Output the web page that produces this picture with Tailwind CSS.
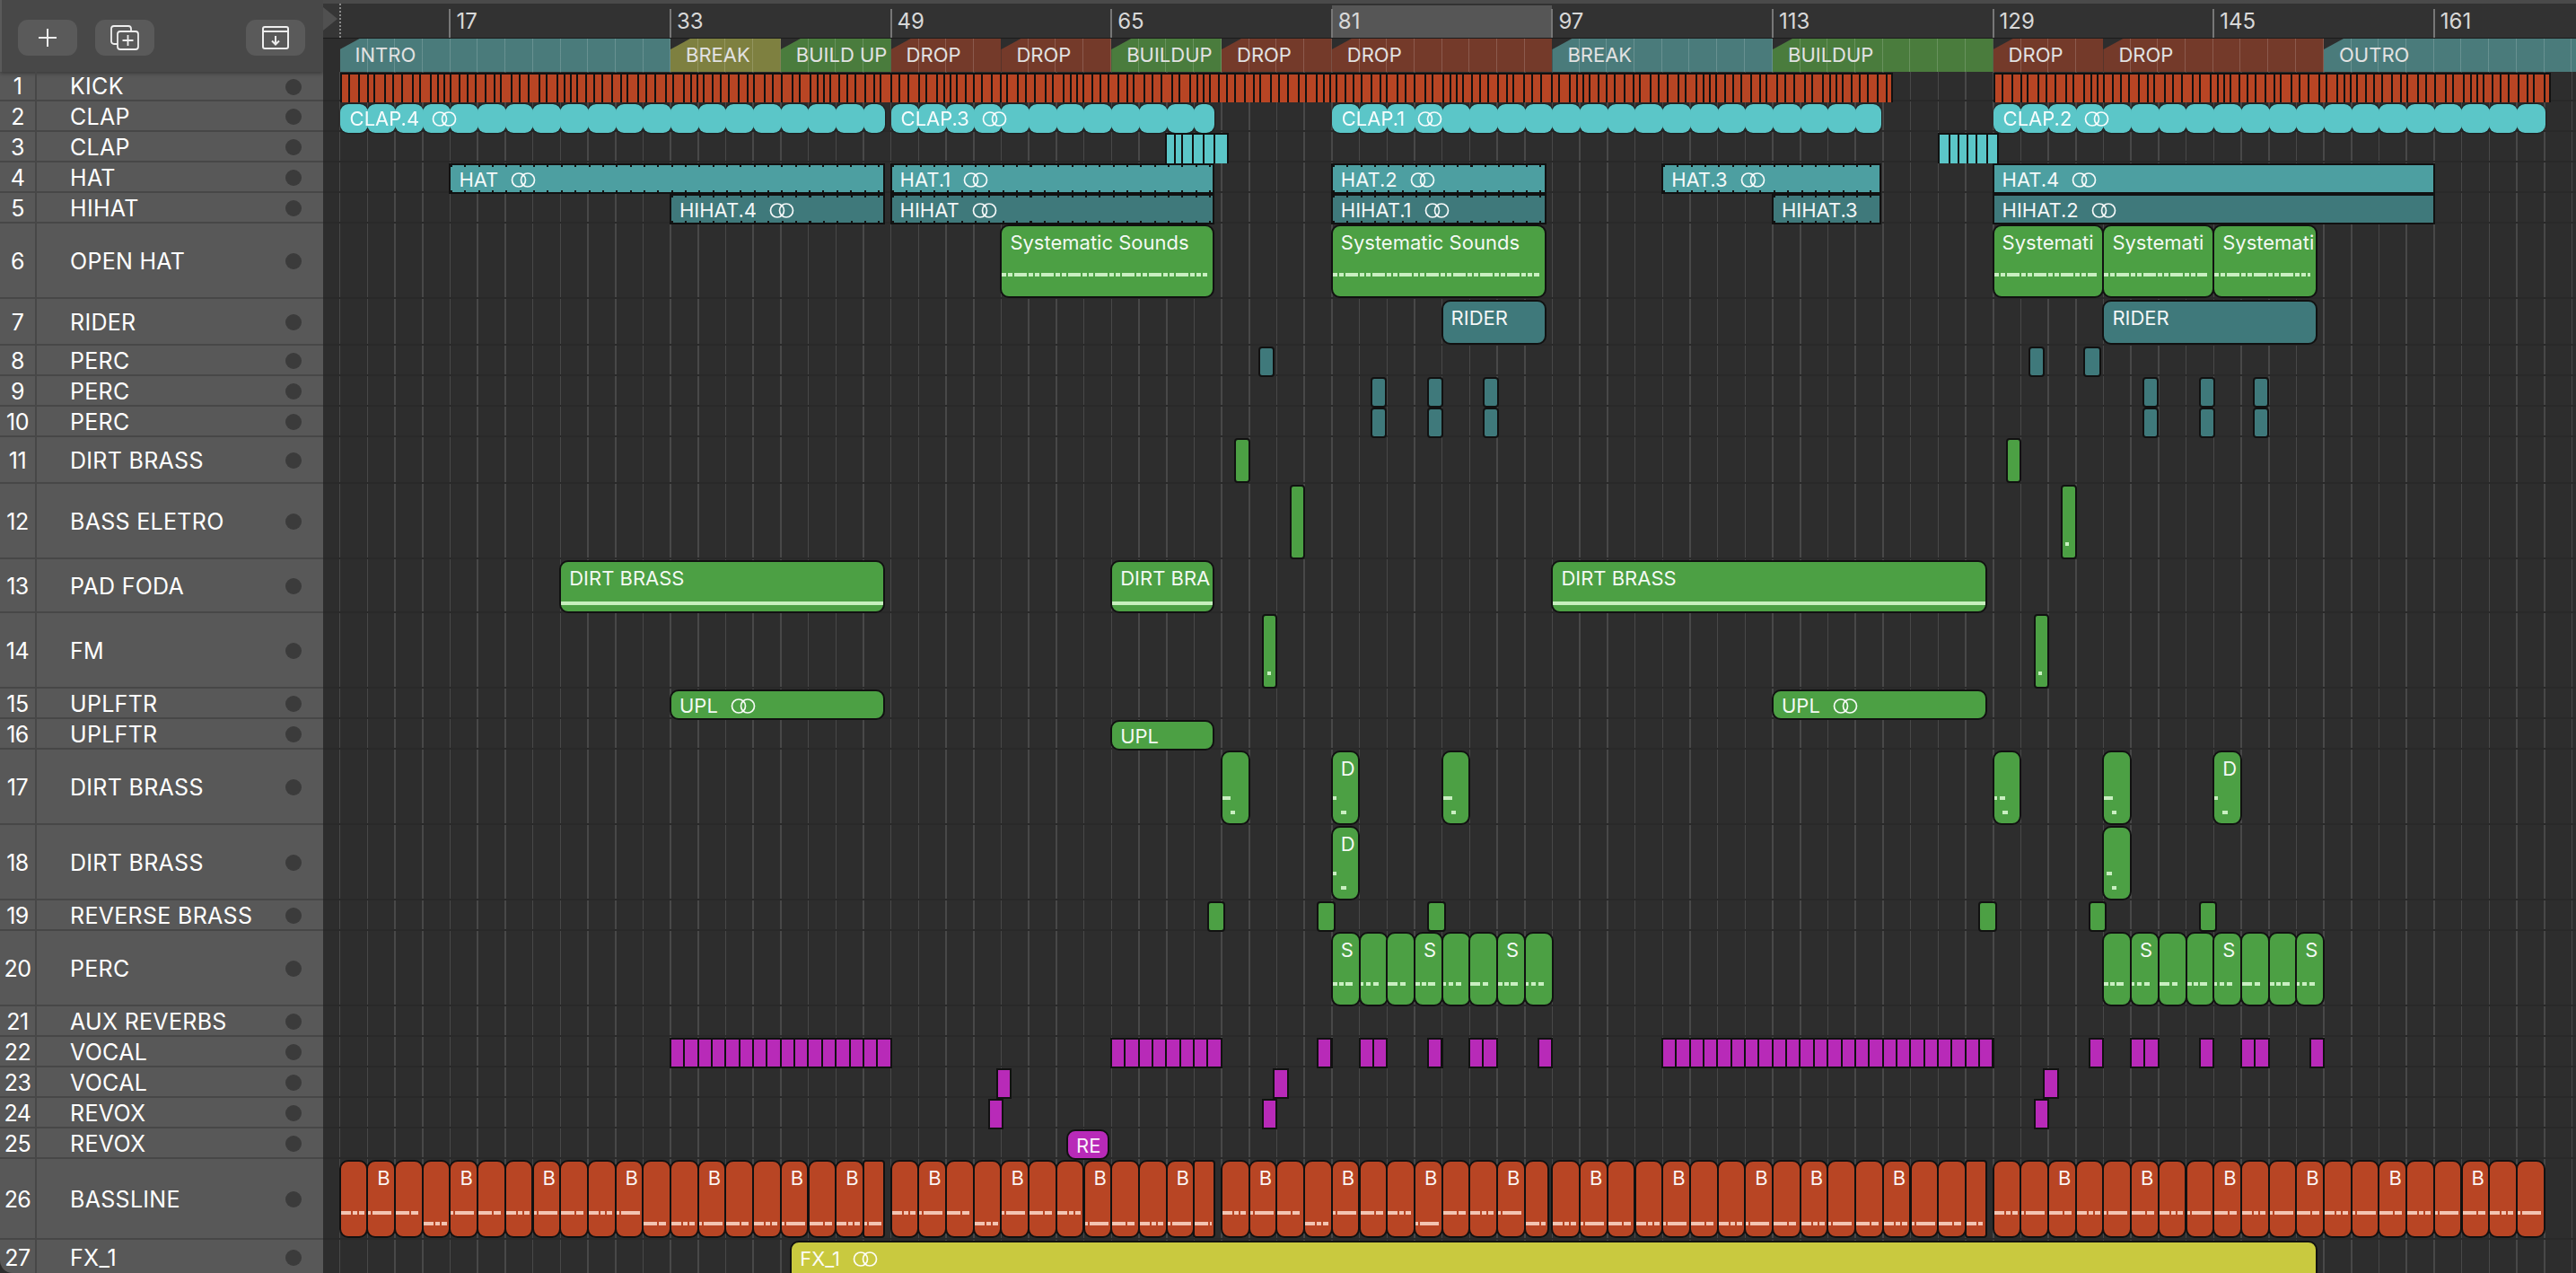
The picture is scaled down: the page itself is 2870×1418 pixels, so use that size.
<!DOCTYPE html>
<html lang="en">
<head>
  <meta charset="UTF-8">
  <title>Arrangement</title>
  <script src="https://cdn.jsdelivr.net/npm/@tailwindcss/browser@4"></script>
</head>
<body class="bg-[#2d2d2d] h-screen overflow-hidden font-['Inter','Liberation_Sans',sans-serif] text-white">
  <div class="flex h-[1418px] overflow-hidden">

    <!-- Track list -->
    <div class="w-[360px] shrink-0 bg-[#585858] rounded-bl-[14px] overflow-hidden flex flex-col">
      <div class="h-[80px] shrink-0 bg-[#484848] border-l-2 border-[#5a5a5a] shadow-[0_2px_4px_#00000055] flex items-start pt-[22px] pl-[18px] pr-[20px]">
        <button class="w-[66px] h-[40px] rounded-[11px] bg-[#5a5a5a] flex items-center justify-center">
          <svg width="22" height="22" viewBox="0 0 22 22" fill="none" stroke="#eee" stroke-width="2"><path d="M11 1v20M1 11h20"/></svg>
        </button>
        <button class="w-[66px] h-[40px] ml-[20px] rounded-[11px] bg-[#5a5a5a] flex items-center justify-center">
          <svg width="32" height="28" viewBox="0 0 32 28" fill="none" stroke="#eee" stroke-width="1.8"><path d="M8 21H4a3 3 0 0 1-3-3V4a3 3 0 0 1 3-3h16a3 3 0 0 1 3 3v2"/><rect x="8" y="7" width="23" height="20" rx="3"/><path d="M19.500 11v12M13.500 17h12"/></svg>
        </button>
        <button class="w-[66px] h-[40px] ml-auto rounded-[11px] bg-[#5a5a5a] flex items-center justify-center">
          <svg width="30" height="26" viewBox="0 0 30 26" fill="none" stroke="#eee" stroke-width="2"><rect x="1" y="1" width="28" height="24" rx="2"/><path d="M1 6h28M15 11v9M11 16.500l4 4 4-4"/></svg>
        </button>
      </div>
      <div id="tracks"></div>
    </div>

    <!-- Arrange area -->
    <div class="relative flex-1 min-w-0 flex flex-col">
      <div class="h-1 shrink-0 bg-[#4a4a4a]"></div>
      <div id="ruler" class="relative h-[39px] shrink-0 bg-[#323232] border-b border-[#1c1c1c]">
        <div class="absolute left-0 top-0 bottom-0 w-[19px] bg-[#363636]"></div>
        <div class="absolute left-0 top-[4px] w-[16px] h-[26px] bg-[#505050] [clip-path:polygon(0_0,100%_50%,0_100%)]"></div>
        <div class="absolute left-[18px] top-0 bottom-0 border-l-2 border-dotted border-[#8a8a8a]"></div>
      </div>
      <div id="markers" class="relative h-[37px] shrink-0 bg-[#2d2d2d]"></div>
      <div class="relative flex-1">
        <div class="absolute left-[18px] right-0 top-0 bottom-0 bg-[repeating-linear-gradient(90deg,#484848_0,#484848_1.5px,transparent_1.5px,transparent_30.7px)]"></div>
        <div id="lanes" class="relative"></div>
      </div>
    </div>
  </div>

  <script>
    const tracks = [
      ["KICK", 33], ["CLAP", 34], ["CLAP", 34], ["HAT", 34], ["HIHAT", 34], ["OPEN HAT", 84], ["RIDER", 52],
      ["PERC", 34], ["PERC", 34], ["PERC", 34], ["DIRT BRASS", 52], ["BASS ELETRO", 84], ["PAD FODA", 60],
      ["FM", 84], ["UPLFTR", 34], ["UPLFTR", 34], ["DIRT BRASS", 84], ["DIRT BRASS", 84], ["REVERSE BRASS", 34],
      ["PERC", 84], ["AUX REVERBS", 34], ["VOCAL", 34], ["VOCAL", 34], ["REVOX", 34], ["REVOX", 34],
      ["BASSLINE", 90], ["FX_1", 40]
    ];

    const barX = b => 18.6 + (b - 9) * 15.35;
    const barW = (a, b) => (b - a) * 15.35;
    const place = (a, b) => `left:${barX(a).toFixed(1)}px;width:${barW(a, b).toFixed(1)}px`;
    // regions carry their outline just outside the bar position
    const placeClip = (a, b) => `left:${(barX(a) - 1).toFixed(1)}px;width:${(barW(a, b) + 2).toFixed(1)}px`;

    const loopIcon = `<svg width="28" height="17" viewBox="0 0 28 17" fill="none" stroke="currentColor" stroke-width="1.7"><circle cx="9" cy="8.500" r="7.500"/><circle cx="19" cy="8.500" r="7.500"/></svg>`;

    const colors = {
      red: "bg-[#b84524]", green: "bg-[#4ca044]", cyan: "bg-[#5bc6c8]", teal: "bg-[#4d9fa1]",
      dteal: "bg-[#3f797b]", mag: "bg-[#b82ab8]", yellow: "bg-[#c9c93f]"
    };
    const redDash = [
      "bg-[linear-gradient(90deg,#f3c4b2_0,#f3c4b2_11px,transparent_11px,transparent_13px,#f3c4b2_13px,#f3c4b2_18px,transparent_18px,transparent_20px,#f3c4b2_20px,#f3c4b2_26px,transparent_26px)]",
      "bg-[linear-gradient(90deg,#f3c4b2_0,#f3c4b2_3px,transparent_3px,transparent_5px,#f3c4b2_5px,#f3c4b2_26px,transparent_26px)]",
      "bg-[linear-gradient(90deg,#f3c4b2_0,#f3c4b2_15px,transparent_15px,transparent_17px,#f3c4b2_17px,#f3c4b2_25px,transparent_25px)]"
    ];
    const greenDash = [
      "bg-[linear-gradient(90deg,#c9efc1_0,#c9efc1_5px,transparent_5px,transparent_7px,#c9efc1_7px,#c9efc1_12px,transparent_12px,transparent_14px,#c9efc1_14px,#c9efc1_22px,transparent_22px)]",
      "bg-[linear-gradient(90deg,#c9efc1_0,#c9efc1_3px,transparent_3px,transparent_6px,#c9efc1_6px,#c9efc1_11px,transparent_11px,transparent_14px,#c9efc1_14px,#c9efc1_20px,transparent_20px)]",
      "bg-[linear-gradient(90deg,#c9efc1_0,#c9efc1_11px,transparent_11px,transparent_14px,#c9efc1_14px,#c9efc1_20px,transparent_20px)]"
    ];
    const sysDash = "bg-[repeating-linear-gradient(90deg,#c9efc1_0,#c9efc1_5px,transparent_5px,transparent_7px,#c9efc1_7px,#c9efc1_12px,transparent_12px,transparent_14px,#c9efc1_14px,#c9efc1_28px,transparent_28px,transparent_30px)]";
    const tickRow = "bg-[repeating-linear-gradient(90deg,#111_0,#111_2px,transparent_2px,transparent_15.35px)]";

    const lanes = tracks.map(() => []);

    function labelHtml(text, loop, tall) {
      if (!text) return "";
      return `<div class="absolute left-[9px] ${tall ? "top-[2px]" : "top-0"} leading-[32px] text-[22px] whitespace-nowrap flex items-center gap-[14px] text-white/95">${text}${loop ? loopIcon : ""}</div>`;
    }

    // plain region on a track; row is the 1-based track number
    function clip(row, a, b, color, o = {}) {
      const h = tracks[row - 1][1];
      const height = o.h || (h <= 34 ? h : h - 1);
      const radius = o.square ? "rounded-none" : (barW(a, b) < 24 ? "rounded-[4px]" : "rounded-[10px]");
      let inner = labelHtml(o.label, o.loop, h > 34);
      if (o.ticks) inner += `<div class="absolute left-0 right-0 top-0 h-[2px] ${tickRow}"></div><div class="absolute left-0 right-0 bottom-0 h-[2px] ${tickRow}"></div>`;
      if (o.sys) inner += `<div class="absolute left-0 right-[6px] top-[52px] h-[4px] ${sysDash}"></div>`;
      if (o.line) inner += `<div class="absolute left-0 right-0 top-[44px] h-[4px] bg-[#c7efbe]"></div>`;
      if (o.slices) inner += `<div class="absolute inset-0 bg-[repeating-linear-gradient(90deg,transparent_0,transparent_13.35px,#111_13.35px,#111_15.35px)]"></div>`;
      (o.dots || []).forEach(d => {
        inner += `<div class="absolute h-[4px] bg-[#c9efc1]" style="left:${d[0]}px;top:${d[1]}px;width:${d[2]}px"></div>`;
      });
      lanes[row - 1].push(`<div class="absolute top-[1px] overflow-hidden border-2 border-[#111] ${radius} ${colors[color]}" style="${placeClip(a, b)};height:${height}px">${inner}</div>`);
    }

    function dividers(row, a, b, color, steps) {
      const h = tracks[row - 1][1];
      let inner = "", x = 0, i = 0;
      const total = barW(a, b);
      while (x < total) {
        inner += `<div class="absolute top-0 bottom-0 w-[2px] bg-[#111]" style="left:${x}px"></div>`;
        x += steps[i++ % steps.length];
      }
      lanes[row - 1].push(`<div class="absolute top-[1px] overflow-hidden border-t-2 border-r-2 border-[#111] ${colors[color]}" style="${place(a, b)};height:${h}px">${inner}</div>`);
    }

    // row of two bar wide rounded tiles (clap group)
    function clapGroup(a, b, label) {
      let inner = "";
      for (let t = a; t < b; t += 2) {
        const left = (t - a) * 15.35;
        const w = Math.min(2, b - t) * 15.35 + 1;
        inner += `<div class="absolute top-0 bottom-0 rounded-[9px] bg-[#5bc6c8]" style="left:${left}px;width:${w}px"></div>`;
      }
      inner += labelHtml(label, true).replace("left-[9px]", "left-[11px]");
      lanes[1].push(`<div class="absolute top-[3px] h-[32px] [filter:drop-shadow(0_0_1px_#000)]" style="${place(a, b)}">${inner}</div>`);
    }

    function bassGroup(a, b, bs, upper) {
      let i = 0;
      for (let t = a; t < b; t += 2, i++) {
        const end = Math.min(t + 2, b);
        const up = upper.includes(i);
        const w = barW(t, end);
        let inner = bs.includes(i) ? `<div class="absolute left-[10px] top-0 leading-[36px] text-[22px] text-white/95">B</div>` : "";
        inner += `<div class="absolute left-0 right-[2px] h-[4px] ${redDash[i % 3]} ${up ? "top-[55px]" : "top-[67px]"}"></div>`;
        const radius = w < 24 ? "rounded-[4px]" : "rounded-[10px]";
        lanes[25].push(`<div class="absolute top-[1px] h-[87px] overflow-hidden border-2 border-[#111] ${radius} bg-[#b84524]" style="left:${(barX(t) - 1).toFixed(1)}px;width:${(w + 2).toFixed(1)}px">${inner}</div>`);
      }
    }

    /* 1 KICK */
    const kickSteps = [9, 11, 10, 7, 12, 9, 10, 12, 8, 12, 8, 7, 7, 10, 9];
    dividers(1, 9, 121.75, "red", kickSteps);
    dividers(1, 129, 169.5, "red", kickSteps);

    /* 2, 3 CLAP */
    clapGroup(9, 48.5, "CLAP.4");
    clapGroup(49, 72.4, "CLAP.3");
    clapGroup(81, 120.8, "CLAP.1");
    clapGroup(129, 169, "CLAP.2");
    dividers(3, 68.9, 73.5, "cyan", [10, 8, 12, 12, 12, 16]);
    dividers(3, 125, 129.4, "cyan", [12, 10, 10, 10, 12, 14]);

    /* 4, 5 HAT */
    clip(4, 17, 48.5, "teal", { label: "HAT", loop: true, square: true, ticks: true });
    clip(4, 49, 72.4, "teal", { label: "HAT.1", loop: true, square: true, ticks: true });
    clip(4, 81, 96.5, "teal", { label: "HAT.2", loop: true, square: true, ticks: true });
    clip(4, 105, 120.8, "teal", { label: "HAT.3", loop: true, square: true, ticks: true });
    clip(4, 129, 161, "teal", { label: "HAT.4", loop: true, square: true });
    clip(5, 33, 48.5, "dteal", { label: "HIHAT.4", loop: true, square: true, ticks: true });
    clip(5, 49, 72.4, "dteal", { label: "HIHAT", loop: true, square: true, ticks: true });
    clip(5, 81, 96.5, "dteal", { label: "HIHAT.1", loop: true, square: true, ticks: true });
    clip(5, 113, 120.8, "dteal", { label: "HIHAT.3", square: true, ticks: true });
    clip(5, 129, 161, "dteal", { label: "HIHAT.2", loop: true, square: true });

    /* 6 OPEN HAT, 7 RIDER */
    clip(6, 57, 72.4, "green", { label: "Systematic Sounds", sys: true, h: 82 });
    clip(6, 81, 96.5, "green", { label: "Systematic Sounds", sys: true, h: 82 });
    clip(6, 129, 137, "green", { label: "Systemati", sys: true, h: 82 });
    clip(6, 137, 145, "green", { label: "Systemati", sys: true, h: 82 });
    clip(6, 145, 152.5, "green", { label: "Systemati", sys: true, h: 82 });
    clip(7, 89, 96.5, "dteal", { label: "RIDER", h: 50 });
    clip(7, 137, 152.5, "dteal", { label: "RIDER", h: 50 });

    /* 8-10 PERC */
    [[75.75, 76.8], [131.6, 132.7], [135.6, 136.8]].forEach(c => clip(8, c[0], c[1], "dteal"));
    [83.9, 88, 92, 139.9, 144, 147.9].forEach(b => {
      clip(9, b, b + 1.05, "dteal");
      clip(10, b, b + 1.05, "dteal");
    });

    /* 11-14 */
    clip(11, 74, 75, "green", { h: 50 }); clip(11, 130, 131, "green", { h: 50 });
    clip(12, 78, 79, "green"); clip(12, 134, 135, "green", { dots: [[3, 62, 4]] });
    clip(13, 25, 48.5, "green", { label: "DIRT BRASS", line: true });
    clip(13, 65, 72.4, "green", { label: "DIRT BRA", line: true });
    clip(13, 97, 128.5, "green", { label: "DIRT BRASS", line: true });
    clip(14, 76, 77, "green", { dots: [[4, 62, 4]] }); clip(14, 132, 133, "green", { dots: [[3, 62, 4]] });

    /* 15, 16 UPLFTR */
    clip(15, 33, 48.5, "green", { label: "UPL", loop: true });
    clip(15, 113, 128.5, "green", { label: "UPL", loop: true });
    clip(16, 65, 72.4, "green", { label: "UPL" });

    /* 17, 18 DIRT BRASS */
    const dirtDots = [[0, 49, 4], [9, 65, 6]];
    clip(17, 73, 75, "green", { dots: [[0, 49, 9], [9, 65, 5]] });
    clip(17, 81, 83, "green", { label: "D", dots: dirtDots });
    clip(17, 89, 91, "green", { dots: [[0, 49, 10], [9, 65, 5]] });
    clip(17, 129, 131, "green", { dots: [[0, 49, 3], [6, 49, 6], [9, 65, 6]] });
    clip(17, 137, 139, "green", { dots: [[0, 49, 10], [9, 65, 5]] });
    clip(17, 145, 147, "green", { label: "D", dots: dirtDots });
    clip(18, 81, 83, "green", { label: "D", dots: dirtDots });
    clip(18, 137, 139, "green", { dots: [[3, 49, 6], [9, 65, 5]] });

    /* 19 REVERSE BRASS */
    [72, 80, 88, 128, 136, 144].forEach(b => clip(19, b, b + 1.2, "green"));

    /* 20 PERC */
    function percTiles(start, letters) {
      for (let i = 0; i < 8; i++) {
        const a = start + i * 2;
        let inner = letters.includes(i) ? `<div class="absolute left-[9px] top-[2px] leading-[32px] text-[22px] text-white/95">S</div>` : "";
        inner += `<div class="absolute left-0 right-0 top-[54px] h-[4px] ${greenDash[i % 3]}"></div>`;
        lanes[19].push(`<div class="absolute top-[1px] h-[83px] overflow-hidden border-2 border-[#111] rounded-[10px] bg-[#4ca044]" style="left:${(barX(a) - 1).toFixed(1)}px;width:33px">${inner}</div>`);
      }
    }
    percTiles(81, [0, 3, 6]);
    percTiles(137, [1, 4, 7]);

    /* 22-25 VOCAL, REVOX */
    [[33, 49], [65, 73], [80, 81], [83, 85], [88, 89], [91, 93], [96, 97], [105, 129], [136, 137], [139, 141], [144, 145], [147, 149], [152, 153]]
      .forEach(c => clip(22, c[0], c[1], "mag", { square: true, slices: true }));
    [56.7, 76.8, 132.7].forEach(b => clip(23, b, b + 1, "mag", { square: true }));
    [56.1, 76, 132].forEach(b => clip(24, b, b + 1, "mag", { square: true }));
    clip(25, 61.8, 64.8, "mag", { label: "RE" });

    /* 26 BASSLINE */
    bassGroup(9, 48.5, [1, 4, 7, 10, 13, 16, 18], [0, 1, 2, 4, 5, 6, 7, 8, 9, 10]);
    bassGroup(49, 72.5, [1, 4, 7, 10], [0, 1, 2, 4, 5, 6]);
    bassGroup(73, 96.7, [1, 4, 7, 10], [0, 1, 2, 4, 5, 6, 8, 9, 10]);
    bassGroup(97, 128.5, [1, 4, 7, 9, 12], []);
    bassGroup(129, 169, [2, 5, 8, 11, 14, 17], [0, 1, 2, 3, 4, 5, 6, 7, 8, 9, 10, 11, 12, 13, 14, 15, 16, 17, 18, 19]);

    /* 27 FX_1 */
    clip(27, 41.75, 152.5, "yellow", { label: "FX_1", loop: true, h: 50 });

    /* track list */
    document.getElementById("tracks").innerHTML = tracks.map((t, i) => `
      <div class="flex items-center border-b-2 border-[#474747] box-border text-[25px] tracking-[0.3px] leading-none" style="height:${t[1]}px">
        <div class="w-[41px] h-full shrink-0 flex items-center justify-center border-r-2 border-[#474747] tracking-[-0.5px] pt-[2px]">${i + 1}</div>
        <div class="flex-1 pl-[37px] pt-[2px] whitespace-nowrap">${t[0]}</div>
        <div class="w-[18px] h-[18px] rounded-full bg-[#3b3b3b] mr-[24px] mt-[2px]"></div>
      </div>`).join("");

    /* lanes */
    document.getElementById("lanes").innerHTML = tracks.map((t, i) => `
      <div class="relative border-b-2 border-[#292929] box-border" style="height:${t[1]}px">${lanes[i].join("")}</div>`).join("");

    /* ruler */
    const ruler = document.getElementById("ruler");
    let rulerHtml = `<div class="absolute top-[2px] bottom-0 bg-[#565656]" style="${place(81, 97)}"></div>`;
    for (let b = 17; b <= 161; b += 16) {
      rulerHtml += `<div class="absolute top-[6px] bottom-0 w-[2px] bg-[#777]" style="left:${barX(b) - 1}px"></div>
        <div class="absolute top-[5px] text-[24px] leading-[30px] text-[#d8d8d8]" style="left:${barX(b) + 7}px">${b}</div>`;
    }
    ruler.insertAdjacentHTML("beforeend", rulerHtml);

    /* markers */
    const markerColors = { teal: "bg-[#4a7b7b]", olive: "bg-[#7e8040]", green: "bg-[#4a7c3d]", brown: "bg-[#743a2a]" };
    const markers = [
      ["INTRO", 9, 33, "teal"], ["BREAK", 33, 41, "olive"], ["BUILD UP", 41, 49, "green"], ["DROP", 49, 57, "brown"],
      ["DROP", 57, 65, "brown"], ["BUILDUP", 65, 73, "green"], ["DROP", 73, 81, "brown"], ["DROP", 81, 97, "brown"],
      ["BREAK", 97, 113, "teal"], ["BUILDUP", 113, 129, "green"], ["DROP", 129, 137, "brown"], ["DROP", 137, 153, "brown"],
      ["OUTRO", 153, 177, "teal"]
    ];
    document.getElementById("markers").innerHTML = markers.map(m => `
      <div class="absolute top-0 h-[37px] flex items-center pl-[17px] overflow-hidden text-[22px] text-[#e2e2e2] whitespace-nowrap ${markerColors[m[3]]} [clip-path:polygon(22px_0,100%_0,100%_100%,0_100%,0_12px)]" style="${place(m[1], m[2])}">
        <div class="absolute inset-0 bg-[repeating-linear-gradient(90deg,transparent_0,transparent_29.7px,#ffffff2a_29.7px,#ffffff2a_30.7px)]"></div>
        <span class="relative">${m[0]}</span>
      </div>`).join("");
  </script>
</body>
</html>
